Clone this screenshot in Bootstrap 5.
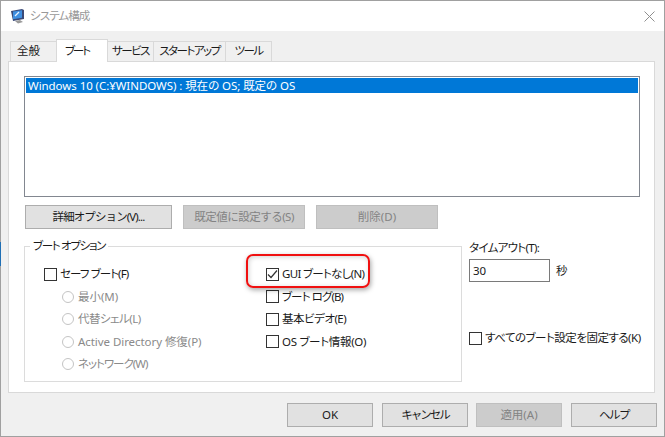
<!doctype html>
<html lang="ja"><head><meta charset="utf-8"><title>システム構成</title>
<link rel="stylesheet" href="https://cdn.jsdelivr.net/npm/bootstrap@5.3.0/dist/css/bootstrap.min.css">
<style>
html,body{margin:0;height:437px;overflow:hidden;background:#fff}
body{font:11.5px/16px "Noto Sans","Noto Sans CJK JP",sans-serif;font-feature-settings:"palt";letter-spacing:-.06px;color:#1a1a1a}
.ks3{letter-spacing:-.3px}.ks5{letter-spacing:-.5px}.ks7{letter-spacing:-.7px}.ks9{letter-spacing:-.9px}.ks10{letter-spacing:-1px}.ks13{letter-spacing:-1.3px}.ks15{letter-spacing:-1.5px}.ks20{letter-spacing:-2px}
.dlg{width:665px;height:437px;border:1px solid #a0a0a0;background:#f0f0f0;position:relative}
.edge-blue{position:absolute;left:-1px;top:241px;width:1px;height:24px;background:#1f6fb5}
.tbar{height:30px;background:#fff;padding-left:9px;padding-right:9px}
.tbar-title{color:#999;margin-left:5px}
.tab-strip{padding:8px 0 0 9px;height:30px;border:0}
.tab-strip .nav-link{font-size:11.5px;line-height:16px;color:#1a1a1a;background:#f0f0f0;border:1px solid #d9d9d9;border-bottom:0;border-radius:0;margin:2px -1px 0 0;height:20px;padding:1px 0 0;text-align:center;white-space:nowrap}
.tab-strip .nav-link.active{background:#fff;color:#1a1a1a;border-color:#d9d9d9;margin-top:0;height:23px;padding-top:3px;position:relative;z-index:2}
.tab-strip .nav-link.tw1{width:47px;padding-right:10px}
.tab-strip .nav-link.tw2{width:52px;padding-right:10px}
.tw3{width:47px}.tw4{width:73px}.tw5{width:47px}
.tpage{margin-left:7px;width:647px;height:332px;background:#fff;border:1px solid #d9d9d9;padding:14px 14px 0 15px}
.boot-list{height:121px;border:1px solid #828790;border-radius:0;padding:1px}
.boot-list .list-group-item{border:0;border-radius:0;background:#0078d7;color:#fff;padding:0 2px;height:15px;line-height:15px;font-size:11.5px}
.btnw{border-radius:0;font-size:11.5px;line-height:16px;padding:0;background:#e1e1e1;border:1px solid #adadad;color:#1a1a1a;height:24px}
.btnw:disabled{background:#ccc;border-color:#bfbfbf;color:#838383;opacity:1}
.act-row{margin:8px 0 0 1px;gap:11px}
.b1{width:147px}.b2,.b3{width:122px}
.lower{margin-top:9px;position:relative}
.grp{width:438px;height:144px;flex:none;border:1px solid #dcdcdc;padding:0 0 0 19px;margin:0;min-width:0}
.grp legend{float:none;width:auto;font-size:11.5px;line-height:16px;padding:0 3px;margin:0 0 0 -14px;color:#1a1a1a}
.grp-cols{padding-top:9px}
.gc1{width:222px}
.rowi{height:22.5px;align-items:center;gap:3px}
.rowi.sub{padding-left:18px;gap:4px;color:#8a8a8a}
.form-check-input.wbox{width:13px;height:13px;margin:0;border:1px solid #333;border-radius:0;background-color:#fff;flex:none}
.form-check-input.wbox:checked{background-color:#fff;border-color:#333;background-image:url("data:image/svg+xml,%3Csvg xmlns='http://www.w3.org/2000/svg' viewBox='0 0 13 13'%3E%3Cpath d='M2 6.5 5 9.5 11 2.5' fill='none' stroke='%23333' stroke-width='1.2'/%3E%3C/svg%3E");background-size:13px}
.form-check-input.wradio{width:12px;height:12px;margin:0;border:1px solid #c4c4c4;background-color:#fff;opacity:1;flex:none}
.side{margin-left:7px;padding-top:2px;width:171px;flex:none}
.side-input{width:81px;height:23px;border:1px solid #7a7a7a;border-radius:0;padding:0 3px;font-size:11.5px;line-height:16px;color:#1a1a1a;box-shadow:none;flex:none}
.sec{margin-left:6px}
.side-row{margin-top:3px}
.lock{margin-top:49px;gap:3px;align-items:center;height:14px;white-space:nowrap}
.foot{margin:10px 0 0 286px;gap:9px}
.foot .btnw{width:86px}
.foot .btnw.b-tight{margin-left:-1px}
.mark-red{position:absolute;left:222px;top:16px;width:124px;height:34px;border:2px solid #f01010;border-radius:7px;box-shadow:1px 2px 5px rgba(0,0,0,.35),inset 1px 1px 5px rgba(0,0,0,.18);pointer-events:none}
</style></head><body>
<div class="dlg d-flex flex-column">
<span class="edge-blue"></span>
<div class="tbar d-flex align-items-center">
<svg width="15" height="16" viewBox="0 0 15 16"><path d="M1 3 12 1l2 1v9l-11 2z" fill="#3b4a78"/><path d="M3 3.5 12 2.2v7.6l-9 1.4z" fill="#3f8fe0"/><path d="M5 8l4-4" stroke="#e8f2ff" stroke-width="1.2"/><path d="M5 13l5-1 3 2-5 1.5z" fill="#9a9a9a"/></svg>
<span class="tbar-title ks9">システム構成</span>
<svg class="ms-auto" width="11" height="11" viewBox="0 0 11 11"><path d="M.5.5l10 10M10.5.5l-10 10" stroke="#8f8f8f" fill="none"/></svg>
</div>
<ul class="nav nav-tabs tab-strip">
<li class="nav-item"><a class="nav-link tw1" href="#">全般</a></li>
<li class="nav-item"><a class="nav-link active tw2 ks20" href="#">ブート</a></li>
<li class="nav-item"><a class="nav-link tw3 ks15" href="#">サービス</a></li>
<li class="nav-item"><a class="nav-link tw4 ks15" href="#">スタートアップ</a></li>
<li class="nav-item"><a class="nav-link tw5 ks15" href="#">ツール</a></li>
</ul>
<div class="tpage">
<ul class="list-group boot-list"><li class="list-group-item">Windows 10 (C:¥WINDOWS) : 現在の OS; 既定の OS</li></ul>
<div class="d-flex act-row">
<button class="btn btnw b1 ks9">詳細オプション(V)...</button>
<button class="btn btnw b2 ks5" disabled>既定値に設定する(S)</button>
<button class="btn btnw b3" disabled>削除(D)</button>
</div>
<div class="d-flex lower">
<fieldset class="grp">
<legend class="ks13">ブート オプション</legend>
<div class="d-flex grp-cols">
<div class="gc1">
<div class="d-flex rowi"><input class="form-check-input wbox" type="checkbox"><span class="ks9">セーフ ブート(F)</span></div>
<div class="d-flex rowi sub"><input class="form-check-input wradio" type="radio" disabled><span>最小(M)</span></div>
<div class="d-flex rowi sub"><input class="form-check-input wradio" type="radio" disabled><span class="ks5">代替シェル(L)</span></div>
<div class="d-flex rowi sub"><input class="form-check-input wradio" type="radio" disabled><span>Active Directory 修復(P)</span></div>
<div class="d-flex rowi sub"><input class="form-check-input wradio" type="radio" disabled><span class="ks10">ネットワーク(W)</span></div>
</div>
<div>
<div class="d-flex rowi"><input class="form-check-input wbox" type="checkbox" checked><span class="ks7">GUI ブートなし(N)</span></div>
<div class="d-flex rowi"><input class="form-check-input wbox" type="checkbox"><span class="ks9">ブート ログ(B)</span></div>
<div class="d-flex rowi"><input class="form-check-input wbox" type="checkbox"><span class="ks5">基本ビデオ(E)</span></div>
<div class="d-flex rowi"><input class="form-check-input wbox" type="checkbox"><span class="ks3">OS ブート情報(O)</span></div>
</div>
</div>
</fieldset>
<div class="side">
<div class="ks7">タイムアウト(T):</div>
<div class="d-flex align-items-center side-row"><input class="form-control side-input" value="30"><span class="sec">秒</span></div>
<div class="d-flex lock"><input class="form-check-input wbox" type="checkbox"><span class="ks5">すべてのブート設定を固定する(K)</span></div>
</div>
<span class="mark-red"></span>
</div>
</div>
<div class="d-flex foot">
<button class="btn btnw">OK</button>
<button class="btn btnw ks20">キャンセル</button>
<button class="btn btnw b-tight" disabled>適用(A)</button>
<button class="btn btnw ks15">ヘルプ</button>
</div>
</div>
</body></html>
